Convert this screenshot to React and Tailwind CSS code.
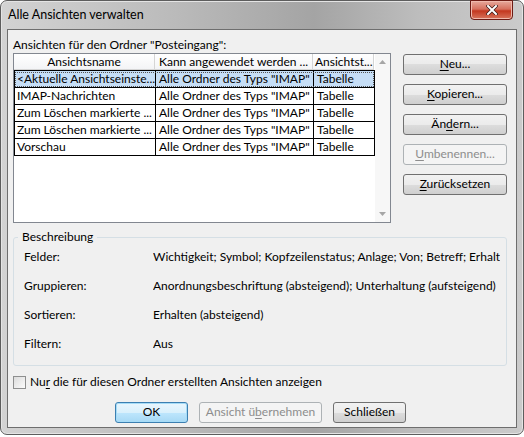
import React from "react";

const font = { fontFamily: 'Lato, "Liberation Sans", sans-serif' };

const rows = [
  { name: "<Aktuelle Ansichtseinste...", applies: 'Alle Ordner des Typs "IMAP"', type: "Tabelle", selected: true },
  { name: "IMAP-Nachrichten", applies: 'Alle Ordner des Typs "IMAP"', type: "Tabelle" },
  { name: "Zum Löschen markierte ...", applies: 'Alle Ordner des Typs "IMAP"', type: "Tabelle" },
  { name: "Zum Löschen markierte ...", applies: 'Alle Ordner des Typs "IMAP"', type: "Tabelle" },
  { name: "Vorschau", applies: 'Alle Ordner des Typs "IMAP"', type: "Tabelle" },
];

const details = [
  ["Felder:", "Wichtigkeit; Symbol; Kopfzeilenstatus; Anlage; Von; Betreff; Erhalten; Größe"],
  ["Gruppieren:", "Anordnungsbeschriftung (absteigend); Unterhaltung (aufsteigend)"],
  ["Sortieren:", "Erhalten (absteigend)"],
  ["Filtern:", "Aus"],
];

function Btn({ children, disabled, primary, className = "" }) {
  let look =
    "border-[#707070] bg-[linear-gradient(#f2f2f2_0%,#ebebeb_50%,#dddddd_50%,#cfcfcf_100%)] text-black";
  if (disabled) look = "border-[#adb2b5] bg-[#f4f4f4] text-[#8d8d8d]";
  if (primary)
    look =
      "border-[#3c7fb1] bg-[linear-gradient(#eaf6fd_0%,#d9f0fc_50%,#bee6fd_50%,#a7d9f5_100%)] text-black shadow-[inset_0_0_0_1px_#a6dcf7]";
  return (
    <div
      className={`flex h-[21px] items-center justify-center rounded-[3px] border text-[12px] leading-none ${look} ${className}`}
    >
      <span className="-mt-px">{children}</span>
    </div>
  );
}

function U({ children }) {
  return <span className="underline underline-offset-2">{children}</span>;
}

export default function App() {
  return (
    <div className="h-[437px] w-[524px] overflow-hidden bg-white text-black" style={font}>
      <div className="flex h-[435px] flex-col rounded-[7px] border border-[#5d5d5d] bg-[linear-gradient(90deg,#d3d3d3_0%,#b9b9b9_35%,#a4a4a4_60%,#bdbdbd_80%,#cbcbcb_100%)] shadow-[inset_0_0_0_1px_#e4e4e4]">
        {/* Titelleiste */}
        <div className="relative flex h-[28px] shrink-0 items-center pl-[7px]">
          <span className="text-[12.5px] text-black">Alle Ansichten verwalten</span>
          <div className="absolute right-[10px] top-[-1px] flex h-[20px] w-[43px] items-center justify-center rounded-b-[4px] border border-[#6d1b14] bg-[linear-gradient(#e7a99c_0%,#d6705e_45%,#c3371f_55%,#d8745c_100%)] shadow-[inset_0_0_0_1px_#f0b9ad]">
            <svg width="12" height="10" viewBox="0 0 12 10">
              <path d="M2 1 L10 9 M10 1 L2 9" stroke="#3b1a16" strokeWidth="3.4" strokeLinecap="square" />
              <path d="M2 1 L10 9 M10 1 L2 9" stroke="#ffffff" strokeWidth="2" strokeLinecap="square" />
            </svg>
          </div>
        </div>

        {/* Inhalt */}
        <div className="mx-[6px] mb-[6px] flex flex-1 flex-col border border-[#6e6e6e] bg-[#f0f0f0] px-[5px] pt-[7px]">
          <div className="h-[16px] text-[12px] leading-[16px]">Ansichten für den Ordner "Posteingang":</div>

          <div className="flex gap-[12px]">
            {/* Liste */}
            <div className="flex h-[170px] w-[378px] border border-[#828790] bg-white">
              <div className="flex-1">
                <div className="flex h-[16px] text-[12px] leading-[15px]">
                  <div className="w-[141px] border-b border-r border-[#d5d5d5] bg-[linear-gradient(#ffffff,#f3f4f6)] text-center">
                    Ansichtsname
                  </div>
                  <div className="w-[158px] overflow-hidden whitespace-nowrap border-b border-r border-[#d5d5d5] bg-[linear-gradient(#ffffff,#f3f4f6)] pl-[4px]">
                    Kann angewendet werden ...
                  </div>
                  <div className="w-[61px] overflow-hidden whitespace-nowrap border-b border-r border-[#d5d5d5] bg-[linear-gradient(#ffffff,#f3f4f6)] pl-[2px]">
                    Ansichtst...
                  </div>
                </div>
                <div className="border-t border-black">
                  {rows.map((r, i) => (
                    <div
                      key={i}
                      className={`flex h-[17px] w-[361px] border-b border-l border-black text-[12px] leading-[16px] ${
                        r.selected ? "bg-[#c6def6] outline outline-1 -outline-offset-2 outline-dotted outline-[#555]" : ""
                      }`}
                    >
                      <div className="w-[141px] overflow-hidden whitespace-nowrap border-r border-black pl-[2px]">{r.name}</div>
                      <div className="w-[158px] overflow-hidden whitespace-nowrap border-r border-black pl-[3px]">{r.applies}</div>
                      <div className="w-[61px] overflow-hidden whitespace-nowrap border-r border-black pl-[3px]">{r.type}</div>
                    </div>
                  ))}
                </div>
              </div>
              {/* Scrollbar */}
              <div className="flex w-[16px] flex-col items-center justify-between bg-[#f7f7f7] py-[6px]">
                <svg width="7" height="4" viewBox="0 0 7 4">
                  <path d="M0 4 L3.5 0 L7 4 Z" fill="#a6a6a6" />
                </svg>
                <svg width="7" height="4" viewBox="0 0 7 4">
                  <path d="M0 0 L3.5 4 L7 0 Z" fill="#a6a6a6" />
                </svg>
              </div>
            </div>

            {/* Knöpfe */}
            <div className="mt-px flex w-[104px] flex-col gap-[9px]">
              <Btn><U>N</U>eu...</Btn>
              <Btn><U>K</U>opieren...</Btn>
              <Btn>Än<U>d</U>ern...</Btn>
              <Btn disabled><U>U</U>mbenennen...</Btn>
              <Btn><U>Z</U>urücksetzen</Btn>
            </div>
          </div>

          {/* Beschreibung */}
          <fieldset className="mt-[6px] h-[137px] w-[494px] rounded-[3px] border border-[#d5dfe5] pt-[4px]">
            <legend className="ml-[4px] px-[4px] text-[12px] leading-[16px]">Beschreibung</legend>
            <div className="flex flex-col gap-[13px] pl-[10px] text-[12px] leading-[16px]">
              {details.map(([k, v]) => (
                <div key={k} className="flex">
                  <div className="w-[129px] shrink-0">{k}</div>
                  <div className="w-[347px] overflow-hidden whitespace-nowrap">{v}</div>
                </div>
              ))}
            </div>
          </fieldset>

          {/* Checkbox */}
          <div className="mt-[8px] flex items-center gap-[4px] text-[12px] leading-[16px]">
            <div className="h-[13px] w-[13px] border border-[#8e8f8f] bg-[linear-gradient(135deg,#dcdcdc,#fbfbfb)]" />
            <span>Nu<U>r</U> die für diesen Ordner erstellten Ansichten anzeigen</span>
          </div>

          {/* Untere Knöpfe */}
          <div className="mt-[12px] flex gap-[11px] pl-[102px]">
            <Btn primary className="w-[73px]">OK</Btn>
            <Btn disabled className="w-[123px]">Ansicht ü<U>b</U>ernehmen</Btn>
            <Btn className="w-[73px]">Schließen</Btn>
          </div>
        </div>
      </div>
    </div>
  );
}
